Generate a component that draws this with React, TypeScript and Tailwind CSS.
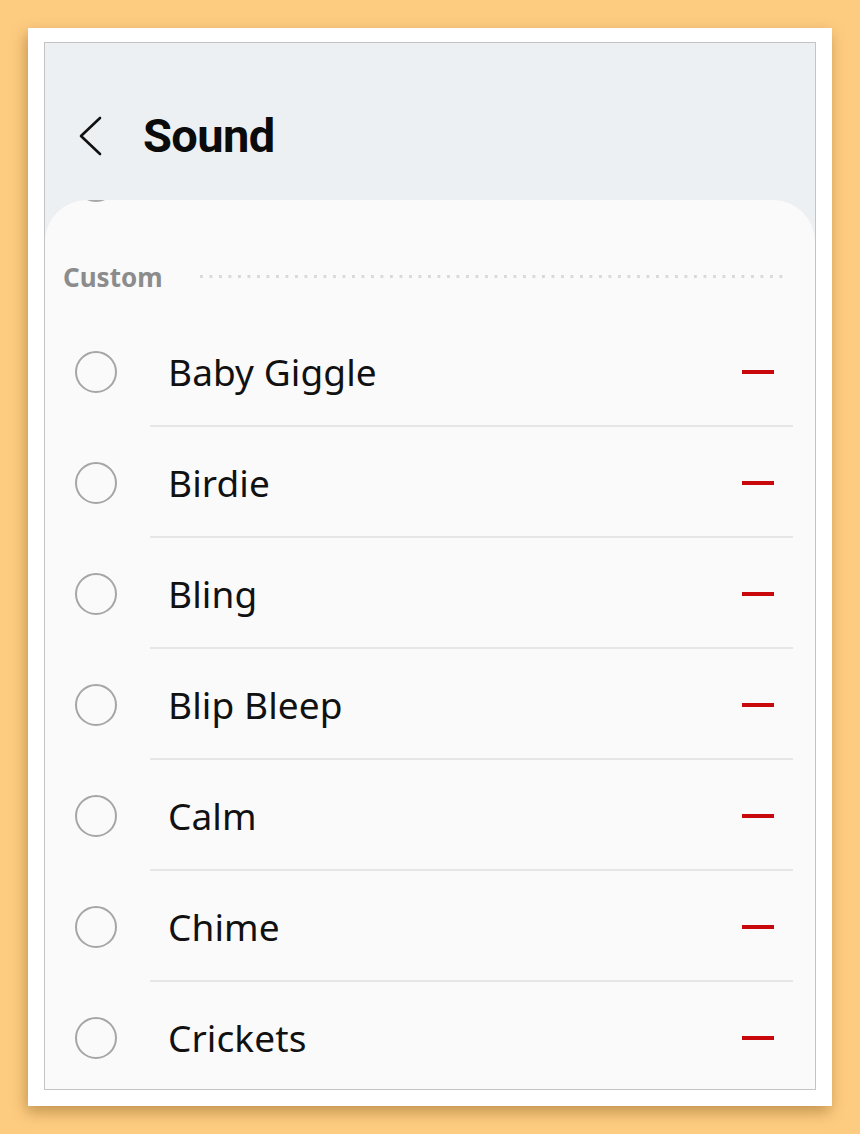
const sounds = ['Baby Giggle', 'Birdie', 'Bling', 'Blip Bleep', 'Calm', 'Chime', 'Crickets']

function SoundRow({ name, last }: { name: string; last: boolean }) {
  return (
    <div className="relative flex h-[111px] shrink-0 items-center pl-[30px] pr-[41px]">
      <span className="h-[42px] w-[42px] shrink-0 rounded-full border-2 border-[#a6a6a6]" />
      <span className="ml-[51px] flex-1 text-[37px] leading-none tracking-[0.1px] text-[#111]">{name}</span>
      <span className="h-[4px] w-[32px] bg-[#c8080b]" />
      {!last && <div className="absolute bottom-0 left-[105px] right-[22px] h-[2px] bg-[#e6e6e6]" />}
    </div>
  )
}

export default function App() {
  return (
    <div
      className="h-[1134px] w-[860px] overflow-hidden bg-[#fecc81] pl-[28px] pt-[28px]"
      style={{ fontFamily: '"Noto Sans", "Open Sans", sans-serif' }}
    >
      <div className="h-[1078px] w-[804px] bg-white px-[16px] pb-[16px] pt-[14px] shadow-[-2px_6px_14px_rgba(120,80,20,0.45)]">
        <div className="flex h-full flex-col overflow-hidden border border-[#c4c4c4] bg-[#edf0f3]">
          {/* Header */}
          <div className="flex h-[157px] shrink-0 items-center pl-[34px] pt-[28px]">
            <svg width="24" height="40" viewBox="0 0 24 40" fill="none" className="shrink-0">
              <polyline points="21,2 2,20 21,38" stroke="#111" strokeWidth="2.6" strokeLinecap="round" strokeLinejoin="round" />
            </svg>
            <h1
              className="ml-[40px] text-[47px] font-bold leading-none tracking-[-0.6px] text-[#0b0b0b]"
              style={{ fontFamily: 'Roboto, "Noto Sans", sans-serif' }}
            >
              Sound
            </h1>
          </div>

          {/* List card */}
          <div className="relative flex flex-1 flex-col overflow-hidden rounded-t-[42px] bg-[#fafafa]">
            <span className="absolute left-[30px] top-[-40px] h-[42px] w-[42px] rounded-full border-2 border-[#a6a6a6]" />
            <div className="flex h-[116px] shrink-0 items-start pl-[18px] pr-[26px] pt-[61px]">
              <span className="text-[26px] font-bold leading-[32px] text-[#8c8c8c]">Custom</span>
              <div className="ml-[37px] mt-[14px] h-[3px] flex-1 bg-[linear-gradient(to_right,#d9d9d9_3px,transparent_3px)] bg-[length:9.5px_3px] bg-repeat-x" />
            </div>
            {sounds.map((s, i) => (
              <SoundRow key={s} name={s} last={i === sounds.length - 1} />
            ))}
          </div>
        </div>
      </div>
    </div>
  )
}
